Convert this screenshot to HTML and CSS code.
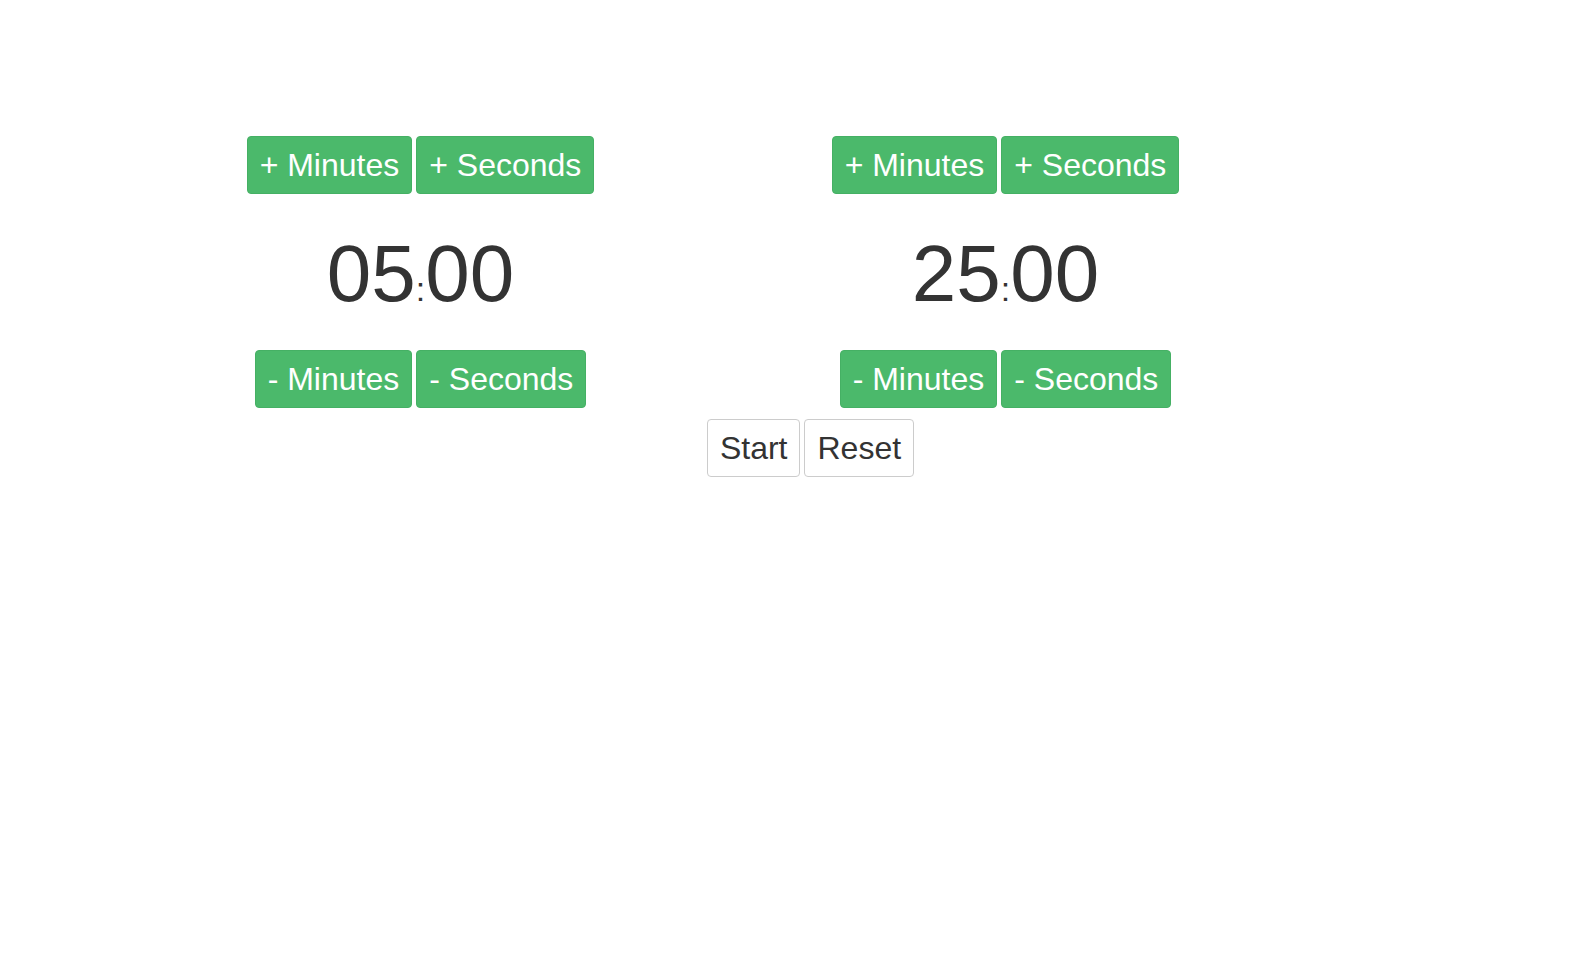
FILE: index.html
```html
<!DOCTYPE html>
<html lang="en">
<head>
<meta charset="utf-8">
<title>Timer</title>
<link rel="stylesheet" href="styles.css">
</head>
<body>
<div class="app">
  <div class="timers">
    <div class="timer">
      <div class="btn-row">
        <button class="btn btn-success">+ Minutes</button>
        <button class="btn btn-success">+ Seconds</button>
      </div>
      <div class="time">05<span class="colon">:</span>00</div>
      <div class="btn-row">
        <button class="btn btn-success">- Minutes</button>
        <button class="btn btn-success">- Seconds</button>
      </div>
    </div>
    <div class="timer">
      <div class="btn-row">
        <button class="btn btn-success">+ Minutes</button>
        <button class="btn btn-success">+ Seconds</button>
      </div>
      <div class="time">25<span class="colon">:</span>00</div>
      <div class="btn-row">
        <button class="btn btn-success">- Minutes</button>
        <button class="btn btn-success">- Seconds</button>
      </div>
    </div>
  </div>
  <div class="controls">
    <button class="btn btn-default">Start</button>
    <button class="btn btn-default">Reset</button>
  </div>
</div>
</body>
</html>
```

FILE: styles.css
```css
html, body {
  margin: 0;
  padding: 0;
  background: #fff;
}
body {
  font-family: "Liberation Sans", Arial, Helvetica, sans-serif;
  color: #333;
}
.app {
  width: 1170px;
  margin-left: 128px;
  padding-top: 136px;
}
.timers {
  display: flex;
}
.timer {
  width: 585px;
  display: flex;
  flex-direction: column;
  align-items: center;
}
.btn-row {
  display: flex;
  gap: 4px;
}
.btn {
  font-family: inherit;
  font-size: 32px;
  line-height: 44px;
  padding: 6px 12px;
  border: 1px solid transparent;
  border-radius: 4px;
  margin: 0;
  cursor: pointer;
}
.btn-success {
  background: #4bb96b;
  border-color: #45b064;
  color: #fff;
}
.btn-default {
  background: #fff;
  border-color: #ccc;
  color: #333;
}
.time {
  font-size: 80px;
  line-height: 80px;
  margin: 40px 0 36px;
  color: #333;
}
.colon {
  font-size: 34px;
  line-height: 0;
}
.controls {
  display: flex;
  justify-content: center;
  gap: 4px;
  padding-left: 195px;
  margin-top: 11px;
}
```
